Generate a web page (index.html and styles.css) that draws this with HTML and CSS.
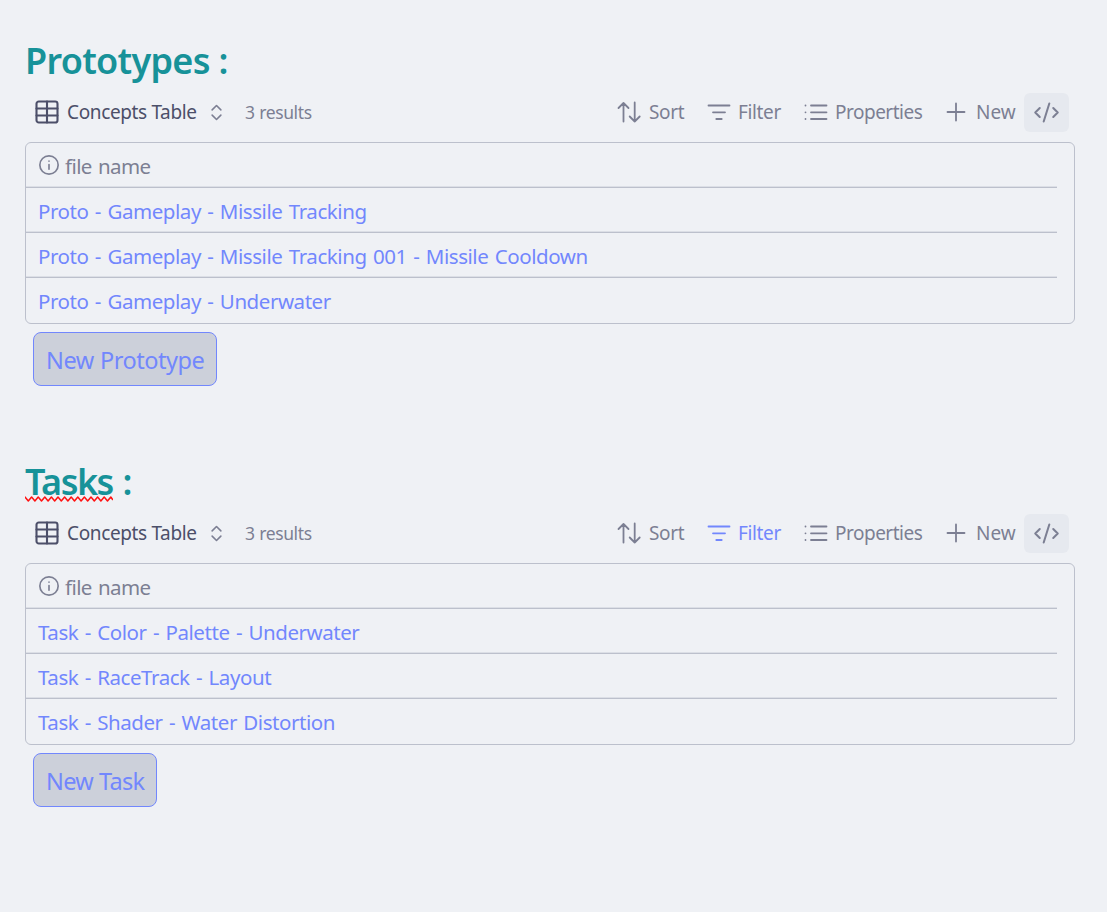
FILE: index.html
```html
<!DOCTYPE html>
<html lang="en">
<head>
<meta charset="utf-8">
<title>Prototypes and Tasks</title>
<link rel="stylesheet" href="styles.css">
</head>
<body>
<svg class="defs" aria-hidden="true">
  <symbol id="table" viewBox="0 0 24 24"><rect x="3" y="3" width="18" height="18" rx="2"/><path d="M12 3v18M3 9h18M3 15h18"/></symbol>
  <symbol id="updown" viewBox="0 0 24 24"><path d="m7 15 5 5 5-5M7 9l5-5 5 5"/></symbol>
  <symbol id="sort" viewBox="0 0 24 22"><path d="M6.5 20.5V2M1.5 7l5-5 5 5M17.7 1.5v19M12.7 15.5l5 5 5-5"/></symbol>
  <symbol id="filter" viewBox="0 0 24 22"><path d="M1.5 4.5h21M6 11.3h12M9.3 18h5.4"/></symbol>
  <symbol id="list" viewBox="0 0 24 22"><path d="M7 4.5h15.5M7 11.3h15.5M7 18h15.5M1.5 4.5h.01M1.5 11.3h.01M1.5 18h.01"/></symbol>
  <symbol id="plus" viewBox="0 0 20 20"><path d="M1.5 10h17M10 1.5v17"/></symbol>
  <symbol id="code" viewBox="0 0 24 24"><path d="m18 16 4-4-4-4M6 8l-4 4 4 4M14.5 4l-5 16"/></symbol>
  <symbol id="info" viewBox="0 0 24 24"><circle cx="12" cy="12" r="10"/><path d="M12 16.5v-5M12 7.8h.01"/></symbol>
</svg>

<section class="block">
  <h2 class="title">Prototypes :</h2>
  <div class="toolbar">
    <div class="view"><svg class="i-table"><use href="#table"/></svg><span class="view-name">Concepts Table</span><svg class="i-updown"><use href="#updown"/></svg></div>
    <span class="results">3 results</span>
    <div class="tool sort"><svg><use href="#sort"/></svg><span>Sort</span></div>
    <div class="tool filter"><svg><use href="#filter"/></svg><span>Filter</span></div>
    <div class="tool props"><svg><use href="#list"/></svg><span>Properties</span></div>
    <div class="tool new"><svg><use href="#plus"/></svg><span>New</span></div>
    <div class="code"><svg><use href="#code"/></svg></div>
  </div>
  <div class="table">
    <div class="row head"><svg><use href="#info"/></svg><span>file name</span></div>
    <div class="row"><a>Proto - Gameplay - Missile Tracking</a></div>
    <div class="row"><a>Proto - Gameplay - Missile Tracking 001 - Missile Cooldown</a></div>
    <div class="row"><a>Proto - Gameplay - Underwater</a></div>
  </div>
  <button class="create create-prototype">New Prototype</button>
</section>

<section class="block">
  <h2 class="title"><span class="misspelled">Tasks<svg class="squiggle" viewBox="0 0 88 6"><path d="M0 1 3.3 5 6.6 1 9.9 5 13.2 1 16.5 5 19.8 1 23.1 5 26.4 1 29.7 5 33 1 36.3 5 39.6 1 42.9 5 46.2 1 49.5 5 52.8 1 56.1 5 59.4 1 62.7 5 66 1 69.3 5 72.6 1 75.9 5 79.2 1 82.5 5 85.8 1 87.6 3.5"/></svg></span> :</h2>
  <div class="toolbar">
    <div class="view"><svg class="i-table"><use href="#table"/></svg><span class="view-name">Concepts Table</span><svg class="i-updown"><use href="#updown"/></svg></div>
    <span class="results">3 results</span>
    <div class="tool sort"><svg><use href="#sort"/></svg><span>Sort</span></div>
    <div class="tool filter active"><svg><use href="#filter"/></svg><span>Filter</span></div>
    <div class="tool props"><svg><use href="#list"/></svg><span>Properties</span></div>
    <div class="tool new"><svg><use href="#plus"/></svg><span>New</span></div>
    <div class="code"><svg><use href="#code"/></svg></div>
  </div>
  <div class="table">
    <div class="row head"><svg><use href="#info"/></svg><span>file name</span></div>
    <div class="row"><a>Task - Color - Palette - Underwater</a></div>
    <div class="row"><a>Task - RaceTrack - Layout</a></div>
    <div class="row"><a>Task - Shader - Water Distortion</a></div>
  </div>
  <button class="create create-task">New Task</button>
</section>
</body>
</html>
```
FILE: styles.css
```css
* { box-sizing: border-box; }
body {
  margin: 0;
  padding: 37px 32px 0 25px;
  background: #eff1f5;
  color: #7c7f93;
  font-family: "Segoe UI", "Noto Sans", sans-serif;
}
svg {
  flex: none;
  fill: none;
  stroke: currentColor;
  stroke-width: 1.8;
  stroke-linecap: round;
  stroke-linejoin: round;
}
.defs { display: none; }
.block { height: 421px; }

.title {
  margin: 0 0 8px;
  height: 48px;
  line-height: 48px;
  font-size: 36px;
  font-weight: 600;
  letter-spacing: -0.7px;
  color: #179299;
  white-space: nowrap;
}
.misspelled { position: relative; display: inline-block; letter-spacing: -1.5px; margin-right: 1px; }
.squiggle {
  position: absolute;
  left: 0;
  top: 38px;
  width: 88px;
  height: 6px;
  stroke: #ff1212;
  stroke-width: 1.5;
}

.toolbar {
  display: flex;
  align-items: center;
  height: 39px;
  margin-bottom: 10px;
  padding: 0 6px 0 8px;
  font-size: 19px;
  line-height: 36px;
  white-space: nowrap;
}
.toolbar span { padding-bottom: 1px; }
.toolbar svg { margin-bottom: 1px; }
.view { display: flex; align-items: center; width: 212px; color: #4c4f69; }
.i-table { width: 28px; height: 28px; margin-right: 6px; }
.view-name { width: 139px; letter-spacing: -0.36px; }
.i-updown { width: 21px; height: 21px; color: #7c7f93; }
.results { font-size: 17.5px; letter-spacing: -0.4px; word-spacing: 0.5px; }
.tool { display: flex; align-items: center; }
.tool svg { width: 24px; height: 22px; }
.sort { margin-left: auto; width: 90px; }
.sort svg { margin-right: 8px; }
.sort span { letter-spacing: -0.35px; }
.filter { width: 97px; }
.filter svg { margin-right: 7px; }
.filter span { letter-spacing: -0.35px; }
.props { width: 142px; }
.props svg { margin-right: 7px; }
.props span { letter-spacing: -0.5px; }
.new { width: 78px; }
.tool.new svg { width: 20px; height: 20px; margin-right: 10px; }
.active { color: #7287fd; }
.code {
  display: grid;
  place-items: center;
  width: 45px;
  height: 39px;
  border-radius: 6px;
  background: #e6e9ef;
}
.code svg { width: 27px; height: 27px; }

.table {
  width: 1050px;
  height: 182px;
  padding-right: 17px;
  border: 1px solid #bcc0cc;
  border-radius: 6px;
  font-size: 20.5px;
  letter-spacing: -0.44px;
  word-spacing: 1.5px;
}
.row {
  display: flex;
  align-items: center;
  height: 45px;
  padding-left: 12px;
  border-bottom: 1px solid #bcc0cc;
  box-shadow: inset 0 -1px #dcdfe6;
  line-height: 44px;
  white-space: nowrap;
}
.row:last-child { border-bottom: 0; box-shadow: none; }
.row a { padding-top: 1px; color: #7287fd; }
.head { letter-spacing: -0.6px; }
.head span { padding-top: 1px; }
.head svg { width: 22px; height: 22px; margin-right: 5px; }

.create {
  display: block;
  height: 54px;
  margin: 8px 0 0 8px;
  padding: 2px 0 0 12px;
  border: 1px solid #7287fd;
  border-radius: 8px;
  background: #ccd0da;
  color: #7287fd;
  font: 23.5px/50px "Segoe UI", "Noto Sans", sans-serif;
  letter-spacing: -0.45px;
  word-spacing: 0.5px;
  text-align: left;
  white-space: nowrap;
}
.create-prototype { width: 184px; }
.create-task { width: 124px; letter-spacing: -0.7px; }
```
